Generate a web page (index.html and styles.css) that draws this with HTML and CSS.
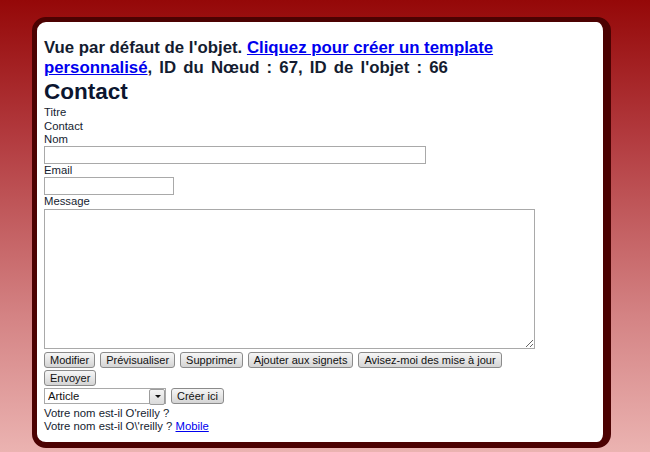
FILE: index.html
```html
<!DOCTYPE html>
<html lang="fr">
<head>
    <meta charset="UTF-8">
    <title>Contact</title>
    <link rel="stylesheet" href="styles.css">
</head>
<body>
    <div class="page-box">
        <h3 class="object-info">Vue par défaut de l'objet. <a href="#">Cliquez pour créer un template personnalisé</a><span class="object-ids">, ID du Nœud : 67, ID de l'objet : 66</span></h3>
        <h1>Contact</h1>

        <div class="field-label">Titre</div>
        <div class="field-value">Contact</div>

        <form class="contact-form">
            <label for="nom">Nom</label>
            <input type="text" id="nom" class="input-name">

            <label for="email">Email</label>
            <input type="text" id="email" class="input-email">

            <label for="message">Message</label>
            <textarea id="message"></textarea>

            <div class="actions first">
                <button type="button">Modifier</button>
                <button type="button">Prévisualiser</button>
                <button type="button">Supprimer</button>
                <button type="button">Ajouter aux signets</button>
                <button type="button">Avisez-moi des mise à jour</button>
            </div>
            <div class="actions">
                <button type="button">Envoyer</button>
            </div>
            <div class="actions">
                <span class="select-wrap">
                    <select class="class-select">
                        <option>Article</option>
                    </select>
                </span>
                <button type="button">Créer ici</button>
            </div>
        </form>

        <p class="note first">Votre nom est-il O'reilly ?</p>
        <p class="note">Votre nom est-il O\'reilly ? <a href="#">Mobile</a></p>
    </div>
</body>
</html>
```

FILE: styles.css
```css
* {
    box-sizing: border-box;
}

html, body {
    height: 100%;
}

body {
    margin: 0;
    padding: 17px 0 0 32px;
    font-family: "Liberation Sans", Arial, sans-serif;
    font-size: 11.3px;
    color: #141c30;
    background: linear-gradient(180deg, #950808 0%, #b23a3e 30%, #d48384 70%, #ebb3b1 100%);
    overflow: hidden;
}

.page-box {
    width: 579px;
    height: 431px;
    background: #fff;
    border: 5px solid #4c0202;
    border-right-width: 8px;
    border-bottom-width: 6px;
    border-radius: 14px;
    padding: 16px 7px 0 7px;
}

.object-info {
    margin: 0;
    font-size: 16.8px;
    line-height: 20px;
    font-weight: bold;
    color: #141c30;
}

.object-info a {
    color: #0000ee;
}

.object-ids {
    word-spacing: 2.5px;
}

h1 {
    margin: 1px 0 0;
    font-size: 22.5px;
    line-height: 26px;
    color: #0c1630;
}

.field-label,
.field-value {
    line-height: 14px;
}

label {
    display: block;
    line-height: 13px;
}

.contact-form {
    margin: 0;
}

input,
textarea {
    display: block;
    border: 1px solid #a9a9a9;
    font-family: inherit;
    font-size: 12px;
    margin: 0;
    padding: 0;
}

.input-name {
    width: 382px;
    height: 18px;
}

.input-email {
    width: 130px;
    height: 18px;
}

textarea {
    width: 491px;
    height: 140px;
    margin-top: 1px;
    resize: both;
}

.actions {
    display: flex;
    gap: 5px;
    margin-top: 2px;
    height: 16px;
}

.actions.first {
    margin-top: 3px;
}

button {
    font-family: inherit;
    font-size: 11px;
    color: #111;
    height: 16px;
    padding: 0 5px;
    line-height: 13px;
    border: 1px solid #8b8b8b;
    border-radius: 3px;
    background: linear-gradient(180deg, #f6f6f6 0%, #e6e6e6 50%, #d4d4d4 100%);
}

.select-wrap {
    position: relative;
    display: block;
    width: 122px;
    height: 16px;
}

.class-select {
    appearance: none;
    width: 122px;
    height: 16px;
    font-family: inherit;
    font-size: 11.3px;
    color: #111;
    border: 1px solid #a9a9a9;
    background: #fff;
    padding: 0 3px;
    margin: 0;
}

.select-wrap::after {
    content: "";
    position: absolute;
    top: 1px;
    right: 1px;
    width: 14px;
    height: 14px;
    border: 1px solid #9c9c9c;
    border-radius: 2px;
    background: linear-gradient(180deg, #f4f4f4 0%, #dadada 100%);
}

.select-wrap::before {
    content: "";
    position: absolute;
    top: 7px;
    right: 5px;
    z-index: 1;
    border-left: 3px solid transparent;
    border-right: 3px solid transparent;
    border-top: 3px solid #111;
}

.note {
    margin: 0;
    line-height: 13px;
}

.note.first {
    margin-top: 3px;
}

.note a {
    color: #0000ee;
}
```
